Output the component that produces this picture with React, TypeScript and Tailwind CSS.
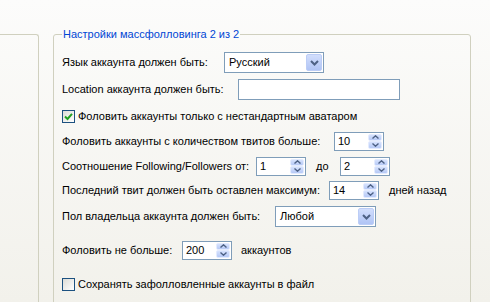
import React from "react";

const font = "font-['Liberation_Sans',Arial,sans-serif] text-[11px] text-black";

function Arrow({ up }: { up?: boolean }) {
  return (
    <svg width="7" height="4" viewBox="0 0 7 4" className="block">
      <path
        d={up ? "M0.5 3.5 L3.5 0.8 L6.5 3.5" : "M0.5 0.5 L3.5 3.2 L6.5 0.5"}
        fill="none"
        stroke="#4d6185"
        strokeWidth="1.4"
      />
    </svg>
  );
}

function Spin({ value }: { value: string }) {
  return (
    <div className="flex h-[19px] w-[50px] shrink-0 border border-[#7f9db9] bg-white p-px">
      <span className="flex-1 pl-[2px] leading-[15px]">{value}</span>
      <div className="flex w-[14px] flex-col">
        <div className="flex flex-1 items-center justify-center rounded-[2px] border border-[#e3ebfe] bg-gradient-to-b from-[#d6e2fd] to-[#b6c9f6]">
          <Arrow up />
        </div>
        <div className="flex flex-1 items-center justify-center rounded-[2px] border border-[#e3ebfe] bg-gradient-to-b from-[#d6e2fd] to-[#b6c9f6]">
          <Arrow />
        </div>
      </div>
    </div>
  );
}

function Combo({ value, w }: { value: string; w: string }) {
  return (
    <div className={`flex h-[21px] ${w} shrink-0 border border-[#7f9db9] bg-white p-px`}>
      <span className="flex-1 pl-[3px] leading-[17px]">{value}</span>
      <div className="flex w-[16px] items-center justify-center rounded-[2px] border border-[#bccdf6] bg-gradient-to-b from-[#d2defc] to-[#b0c4f5]">
        <svg width="9" height="6" viewBox="0 0 9 6">
          <path d="M1 1 L4.5 4.5 L8 1" fill="none" stroke="#4d6185" strokeWidth="2" />
        </svg>
      </div>
    </div>
  );
}

function Check({ checked }: { checked?: boolean }) {
  return (
    <div className="flex h-[13px] w-[13px] shrink-0 items-center justify-center border border-[#1c5180] bg-gradient-to-br from-[#dcdcd7] to-white">
      {checked && (
        <svg width="9" height="9" viewBox="0 0 9 9">
          <path d="M1 4.5 L3.5 7 L8 1.8" fill="none" stroke="#21a121" strokeWidth="2" />
        </svg>
      )}
    </div>
  );
}

const label = "shrink-0 whitespace-nowrap";

export default function App() {
  return (
    <div className={`flex h-[302px] w-[490px] items-start overflow-hidden bg-gradient-to-b from-[#fcfcfb] to-[#f2f1eb] ${font}`}>
      {/* left tab edge */}
      <div className="mt-[34px] h-[300px] w-[39px] shrink-0 rounded-tr-[3px] border-t border-r border-[#d0d0bf]" />

      <fieldset className="ml-[14px] mt-[27px] h-[300px] w-[418px] shrink-0 rounded-[3px] border border-[#d0d0bf] pl-[8px] pt-[11px]">
        <legend className="px-[1px] leading-[14px] whitespace-nowrap text-[#0046d5]">
          Настройки массфолловинга 2 из 2
        </legend>

        <div className="flex h-[21px] items-center">
          <span className={`${label} w-[162px]`}>Язык аккаунта должен быть:</span>
          <Combo value="Русский" w="w-[100px]" />
        </div>

        <div className="mt-[6px] flex h-[21px] items-center">
          <span className={`${label} w-[176px]`}>Location аккаунта должен быть:</span>
          <div className="h-[21px] w-[162px] shrink-0 border border-[#7f9db9] bg-white" />
        </div>

        <div className="mt-[6px] flex h-[20px] items-center gap-[3px]">
          <Check checked />
          <span className={label}>Фоловить аккаунты только с нестандартным аватаром</span>
        </div>

        <div className="mt-[5px] flex h-[20px] items-center">
          <span className={`${label} w-[272px]`}>Фоловить аккаунты с количеством твитов больше:</span>
          <Spin value="10" />
        </div>

        <div className="mt-[5px] flex h-[20px] items-center">
          <span className={`${label} w-[194px]`}>Соотношение Following/Followers от:</span>
          <Spin value="1" />
          <span className={`${label} w-[34px] pl-[10px]`}>до</span>
          <Spin value="2" />
        </div>

        <div className="mt-[4px] flex h-[20px] items-center">
          <span className={`${label} w-[267px]`}>Последний твит должен быть оставлен максимум:</span>
          <Spin value="14" />
          <span className={`${label} pl-[10px]`}>дней назад</span>
        </div>

        <div className="mt-[6px] flex h-[21px] items-center">
          <span className={`${label} w-[213px]`}>Пол владельца аккаунта должен быть:</span>
          <Combo value="Любой" w="w-[101px]" />
        </div>

        <div className="mt-[13px] flex h-[20px] items-center">
          <span className={`${label} w-[120px]`}>Фоловить не больше:</span>
          <Spin value="200" />
          <span className={`${label} pl-[9px]`}>аккаунтов</span>
        </div>

        <div className="mt-[14px] flex h-[20px] items-center gap-[3px]">
          <Check />
          <span className={label}>Сохранять зафолловленные аккаунты в файл</span>
        </div>
      </fieldset>
    </div>
  );
}
